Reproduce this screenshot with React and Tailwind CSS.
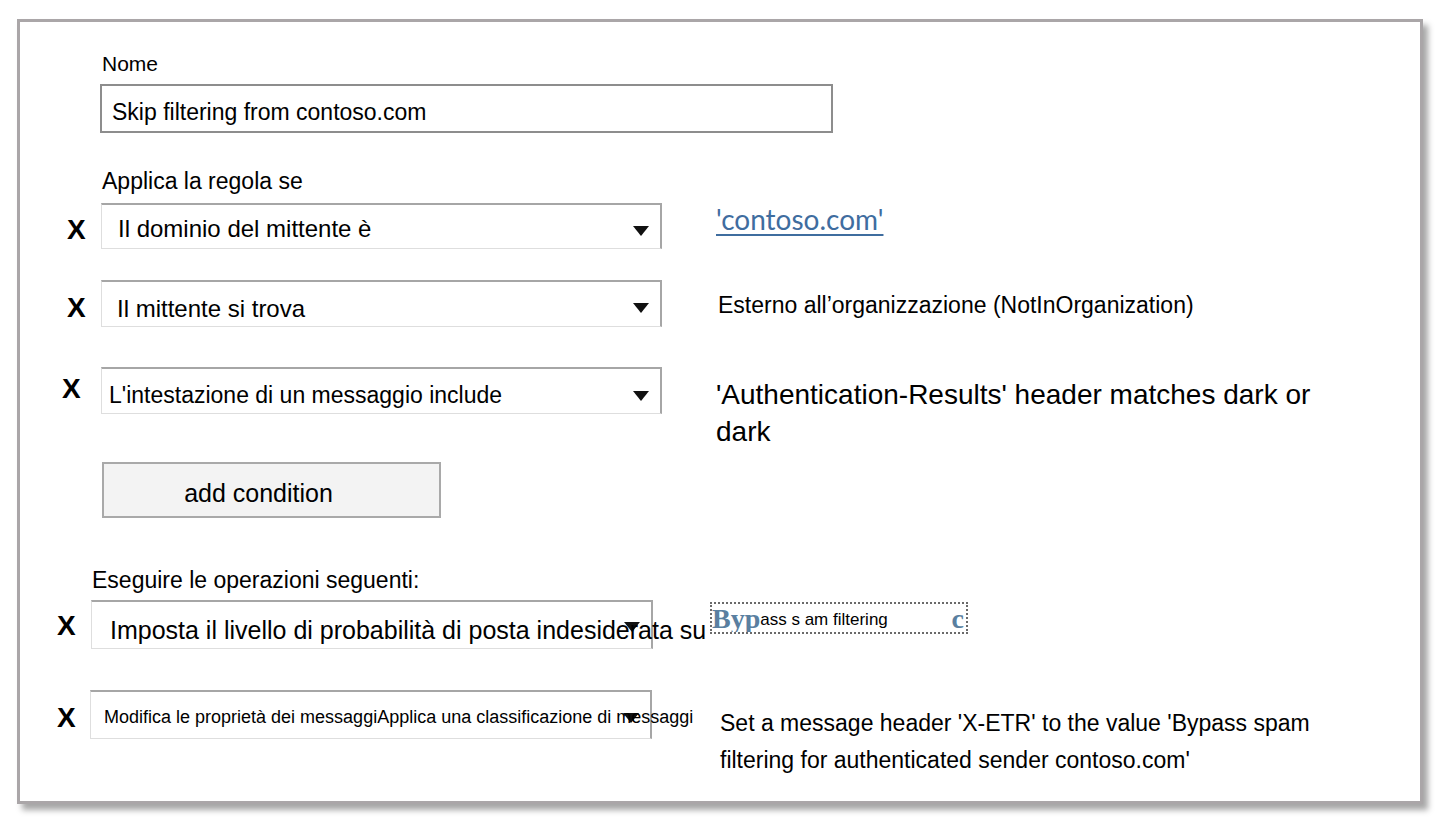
import React from "react";

const sans = { fontFamily: '"Liberation Sans", Arial, sans-serif' };

// Dropdown with the small black caret at the right
const Dropdown = ({ label, width, height, textClass, pl, caretTop }) => (
  <div
    className={`relative shrink-0 bg-white border-t-2 border-r-2 border-l border-b border-t-[#a6a6a6] border-r-[#a6a6a6] border-l-[#dedede] border-b-[#dedede] ${width} ${height}`}
  >
    <span className={`absolute right-[11px] ${caretTop}`}>
      <svg width="16" height="10" viewBox="0 0 16 10">
        <path d="M0 0 H16 L8 10 Z" fill="#111" />
      </svg>
    </span>
    <div className={`relative h-full flex items-center whitespace-nowrap text-black ${pl} ${textClass}`}>
      {label}
    </div>
  </div>
);

const XMark = ({ className }) => (
  <span className={`font-bold text-[28px] leading-none text-black ${className}`}>X</span>
);

export default function App() {
  return (
    <div className="min-h-screen bg-white pt-[19px] pl-[17px]" style={sans}>
      <div className="w-[1406px] h-[785px] border-[3px] border-[#aaa6a8] shadow-[5px_6px_6px_rgba(0,0,0,0.35)] flex flex-col">
        {/* Nome */}
        <div className="mt-[30px] ml-[82px] h-[24px] leading-[24px] text-[21px] text-black">Nome</div>
        <div className="mt-[8px] ml-[80px] w-[733px] h-[49px] border-2 border-[#8d8d8d] flex items-center pl-[10px] pt-[8px] text-[23px] text-black">
          Skip filtering from contoso.com
        </div>

        {/* Applica la regola se */}
        <div className="mt-[35px] ml-[82px] h-[26px] leading-[26px] text-[23px] text-black">Applica la regola se</div>

        {/* condition 1 */}
        <div className="mt-[9px] flex items-start h-[46px]">
          <div className="w-[81px] pl-[47px] pt-[13px]"><XMark /></div>
          <Dropdown
            label="Il dominio del mittente è"
            width="w-[561px]"
            height="h-[46px]"
            pl="pl-[16px]"
            textClass="text-[24px] pt-[5px]"
            caretTop="top-[21px]"
          />
          <a className="ml-[54px] mt-[1px] text-[28px] leading-[30px] text-[#3f6d9f] underline underline-offset-[4px] decoration-[1.5px]" style={{ fontFamily: 'Lato, "Liberation Sans", sans-serif' }}>
            'contoso.com'
          </a>
        </div>

        {/* condition 2 */}
        <div className="mt-[31px] flex items-start h-[47px]">
          <div className="w-[81px] pl-[47px] pt-[14px]"><XMark /></div>
          <Dropdown
            label="Il mittente si trova"
            width="w-[561px]"
            height="h-[47px]"
            pl="pl-[15px]"
            textClass="text-[24px] pt-[10px]"
            caretTop="top-[21px]"
          />
          <div className="ml-[56px] mt-[12px] text-[23px] leading-[26px] text-black whitespace-nowrap">
            Esterno all’organizzazione (NotInOrganization)
          </div>
        </div>

        {/* condition 3 */}
        <div className="mt-[40px] flex items-start h-[47px]">
          <div className="w-[81px] pl-[42px] pt-[8px]"><XMark /></div>
          <Dropdown
            label="L'intestazione di un messaggio include"
            width="w-[561px]"
            height="h-[47px]"
            pl="pl-[7px]"
            textClass="text-[23px] pt-[8px]"
            caretTop="top-[22px]"
          />
          <div className="ml-[54px] mt-[9px] w-[620px] text-[28px] leading-[37px] text-black">
            'Authentication-Results' header matches dark or dark
          </div>
        </div>

        {/* add condition */}
        <button className="mt-[48px] ml-[82px] w-[339px] h-[56px] bg-[#f3f3f3] border-2 border-[#a9a9a9] text-[25px] text-black flex items-center justify-center pr-[26px] pt-[8px]">
          add condition
        </button>

        {/* Eseguire le operazioni seguenti */}
        <div className="mt-[48px] ml-[72px] h-[28px] leading-[28px] text-[23px] text-black">Eseguire le operazioni seguenti:</div>

        {/* action 1 */}
        <div className="mt-[6px] flex items-start h-[49px]">
          <div className="w-[71px] pl-[37px] pt-[12px]"><XMark /></div>
          <Dropdown
            label="Imposta il livello di probabilità di posta indesiderata su"
            width="w-[562px]"
            height="h-[49px]"
            pl="pl-[18px]"
            textClass="text-[25px] pt-[12px]"
            caretTop="top-[20px]"
          />
          <div className="ml-[57px] mt-[2px] w-[258px] h-[32px] border-2 border-dotted border-[#6a6a6a] flex items-end justify-between pr-[2px] overflow-hidden">
            <span className="flex items-end whitespace-nowrap">
              <span className="text-[28px] leading-[26px] font-bold text-[#5a7fa0]" style={{ fontFamily: '"Liberation Serif", serif' }}>Byp</span>
              <span className="text-[17px] leading-[24px] text-black">ass s am filtering</span>
            </span>
            <span className="text-[28px] leading-[26px] font-bold text-[#5a7fa0]" style={{ fontFamily: '"Liberation Serif", serif' }}>c</span>
          </div>
        </div>

        {/* action 2 */}
        <div className="mt-[41px] flex items-start h-[49px]">
          <div className="w-[70px] pl-[37px] pt-[14px]"><XMark /></div>
          <Dropdown
            label="Modifica le proprietà dei messaggiApplica una classificazione di messaggi"
            width="w-[562px]"
            height="h-[49px]"
            pl="pl-[13px]"
            textClass="text-[18px] pt-[4px]"
            caretTop="top-[21px]"
          />
          <div className="ml-[68px] mt-[15px] w-[610px] text-[23px] leading-[37px] text-black">
            Set a message header 'X-ETR' to the value 'Bypass spam filtering for authenticated sender contoso.com'
          </div>
        </div>
      </div>
    </div>
  );
}
